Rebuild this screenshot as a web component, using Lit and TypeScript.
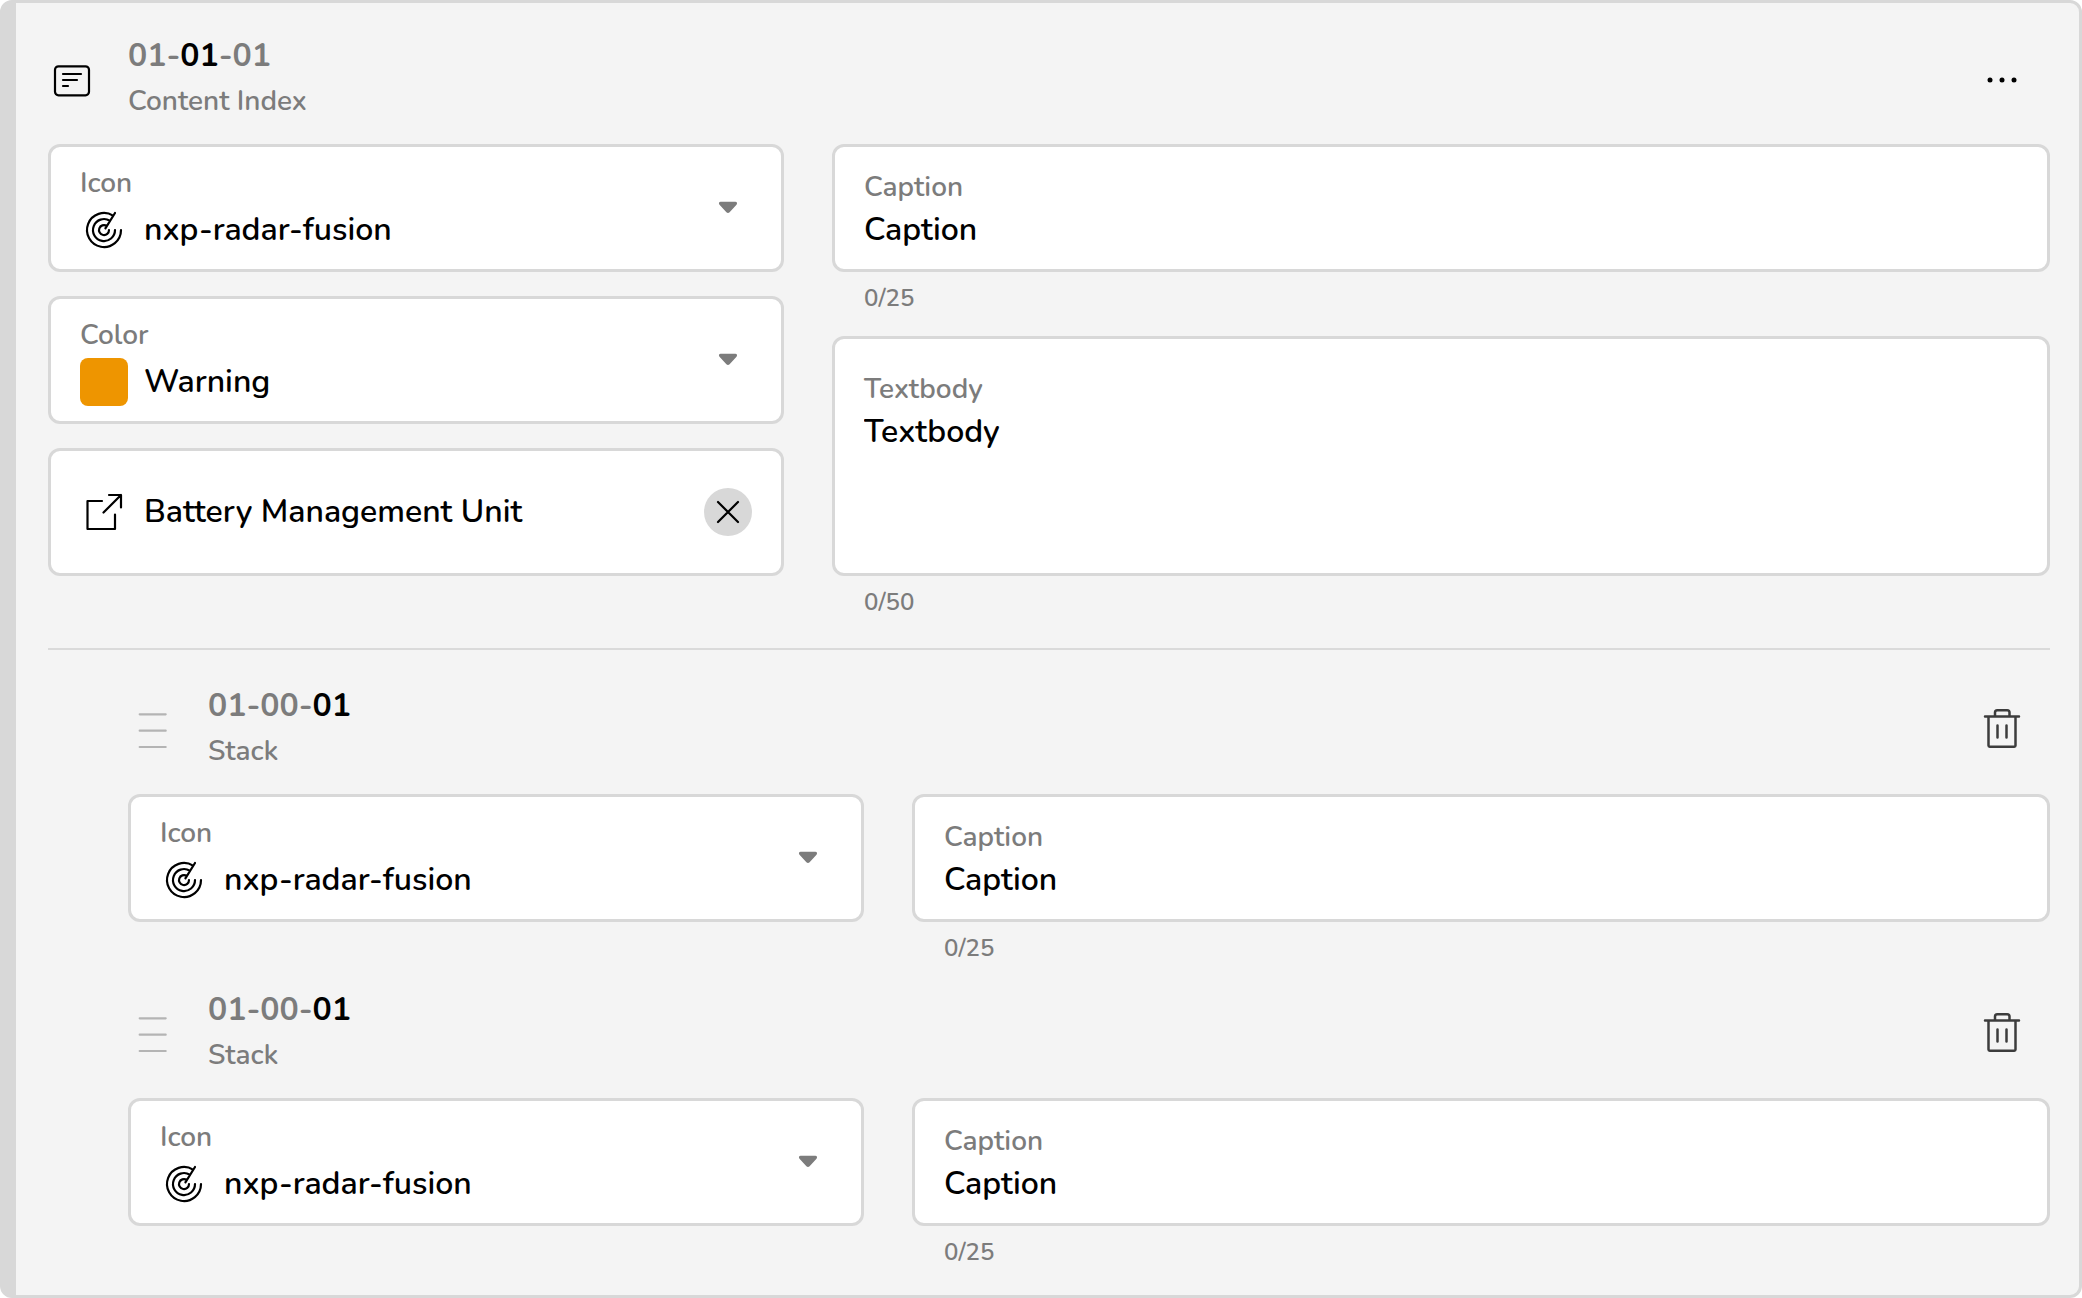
import { LitElement, html, css, svg } from "lit";
import { customElement, property } from "lit/decorators.js";

const icons = {
  content: svg`<rect x="7" y="10.3" width="34" height="29" rx="3.5"/><path d="M15 18H33M15 24H29M15 30H20"/>`,
  radar: svg`<path d="M33 9.6A17 17 0 1 0 41 24M29.8 14.7A11 11 0 1 0 35 24M26.6 19.8A5 5 0 1 0 29 24M25.4 22.4L35 7"/>`,
  external: svg`<path d="M22 13H7.5V41H35V26.5M23.5 24.5L41 7M29 7H41V19.5"/>`,
  trash: svg`<path d="M7 10.5H41M10.5 10.5V39.5Q10.5 40.7 11.7 40.7H36.3Q37.5 40.7 37.5 39.5V10.5M17 10V6.5Q17 4.2 19.3 4.2H29.2Q31.5 4.2 31.5 6.5V10M19.5 19.5V31.5M28.5 19.5V31.5"/>`,
  grip: svg`<path d="M11.7 8.3H37.7M11.7 24.7H37.7M11.7 41H37.7"/>`,
  close: svg`<path d="M14 14L34 34M34 14L14 34"/>`,
  more: svg`<g fill="currentColor" stroke="none"><circle cx="12" cy="24" r="2.5"/><circle cx="24" cy="24" r="2.5"/><circle cx="36" cy="24" r="2.5"/></g>`,
  caret: svg`<path fill="currentColor" stroke="none" d="M16.6 17.7H31.4C33 17.7 33.6 19.6 32.5 20.7L25.6 28.2Q24 29.8 22.4 28.2L15.5 20.7C14.4 19.6 15 17.7 16.6 17.7Z"/>`,
};

const icon = (name: keyof typeof icons) => html`
  <svg class="icon ${name}" viewBox="0 0 48 48" aria-hidden="true">${icons[name]}</svg>
`;

const shared = css`
  * {
    box-sizing: border-box;
  }
  .icon {
    display: block;
    flex: none;
    width: 48px;
    height: 48px;
    fill: none;
    stroke: currentColor;
    stroke-width: 2.2;
    stroke-linecap: round;
    stroke-linejoin: round;
  }
  .icon.trash {
    stroke-width: 2.5;
  }
  button {
    display: block;
    flex: none;
    width: 48px;
    height: 48px;
    padding: 0;
    border: 0;
    background: none;
    color: inherit;
    cursor: pointer;
  }
  .box {
    border: 3px solid #d8d8d8;
    border-radius: 12px;
    background: #fff;
  }
  .label {
    display: block;
    color: #7c7c7c;
    font-size: 28px;
    line-height: 40px;
  }
`;

@customElement("select-field")
export class SelectField extends LitElement {
  @property() label = "";
  @property() value = "";
  @property() kind: "icon" | "color" = "icon";

  static styles = [
    shared,
    css`
      :host {
        display: block;
      }
      .box {
        display: flex;
        align-items: center;
        height: 128px;
        padding: 0 29px;
      }
      .main {
        flex: 1;
        min-width: 0;
        align-self: stretch;
        padding-top: 16px;
      }
      .row {
        display: flex;
        gap: 16px;
        margin-top: 3px;
      }
      .swatch {
        flex: none;
        width: 48px;
        height: 48px;
        border-radius: 8px;
        background: #ee9500;
      }
      select {
        appearance: none;
        flex: 1;
        min-width: 0;
        height: 48px;
        padding: 0 0 2px;
        border: 0;
        background: none;
        color: #000;
        font: inherit;
      }
      .caret {
        color: #7c7c7c;
      }
    `,
  ];

  render() {
    return html`
      <div class="box">
        <div class="main">
          <label class="label" for="choice">${this.label}</label>
          <div class="row">
            ${this.kind === "color" ? html`<span class="swatch"></span>` : icon("radar")}
            <select id="choice">
              <option>${this.value}</option>
            </select>
          </div>
        </div>
        ${icon("caret")}
      </div>
    `;
  }
}

@customElement("text-field")
export class TextField extends LitElement {
  @property() label = "";
  @property() value = "";
  @property() count = "";
  @property({ type: Boolean }) multiline = false;

  static styles = [
    shared,
    css`
      :host {
        display: block;
      }
      .box {
        display: flex;
        flex-direction: column;
        height: 128px;
        padding: 20px 29px 14px;
      }
      .tall {
        height: 240px;
        padding-top: 30px;
      }
      input,
      textarea {
        display: block;
        width: 100%;
        height: 46px;
        padding: 0;
        border: 0;
        background: none;
        color: #000;
        font: inherit;
        line-height: 46px;
        resize: none;
      }
      textarea {
        flex: 1;
      }
      .count {
        padding: 4px 0 0 32px;
        color: #7c7c7c;
        font-size: 24px;
        line-height: 44px;
      }
    `,
  ];

  render() {
    return html`
      <div class="box ${this.multiline ? "tall" : ""}">
        <label class="label" for="text">${this.label}</label>
        ${this.multiline
          ? html`<textarea id="text" .value=${this.value}></textarea>`
          : html`<input id="text" type="text" .value=${this.value} />`}
      </div>
      <div class="count">${this.count}</div>
    `;
  }
}

@customElement("entry-header")
export class EntryHeader extends LitElement {
  @property({ type: Array }) parts: string[] = [];
  @property({ type: Number }) current = 0;
  @property() caption = "";
  @property({ type: Boolean }) stacked = false;

  static styles = [
    shared,
    css`
      :host {
        display: block;
      }
      header {
        display: flex;
        align-items: center;
        gap: 32px;
        height: 128px;
        padding-right: 24px;
      }
      .text {
        flex: 1;
        padding-bottom: 6px;
      }
      h2 {
        margin: 0;
        color: #7c7c7c;
        font-size: 32px;
        font-weight: 700;
        line-height: 48px;
      }
      b {
        color: #000;
        font-weight: 700;
      }
      p {
        margin: 0;
        color: #7c7c7c;
        font-size: 28px;
        line-height: 42px;
      }
      .grip {
        color: #b4b4b4;
      }
      .trash {
        color: #3c3c3c;
      }
    `,
  ];

  render() {
    return html`
      <header>
        ${this.stacked
          ? html`<button aria-label="Reorder">${icon("grip")}</button>`
          : icon("content")}
        <div class="text">
          <h2>${this.parts.map(
            (part, i) => html`${i ? "-" : ""}${i === this.current ? html`<b>${part}</b>` : part}`
          )}</h2>
          <p>${this.caption}</p>
        </div>
        <button aria-label=${this.stacked ? "Delete" : "More"}>
          ${icon(this.stacked ? "trash" : "more")}
        </button>
      </header>
    `;
  }
}

@customElement("app-root")
export class AppRoot extends LitElement {
  static styles = [
    shared,
    css`
      :host {
        display: block;
        background: #fff;
        color: #000;
        font-family: Nunito, Lato, "Open Sans", sans-serif;
        font-size: 32px;
        font-weight: 600;
      }
      .panel {
        padding: 13px 29px 21px 32px;
        border: 3px solid #d8d8d8;
        border-left-width: 16px;
        border-radius: 12px;
        background: #f4f4f4;
      }
      .fields {
        display: flex;
        align-items: flex-start;
        gap: 48px;
      }
      .side {
        display: grid;
        flex: 0 1 736px;
        gap: 24px;
      }
      .wide {
        display: grid;
        flex: 1;
        gap: 16px;
      }
      .link {
        display: flex;
        align-items: center;
        gap: 16px;
        height: 128px;
        padding: 0 29px;
      }
      .link a {
        display: flex;
        align-items: center;
        flex: 1;
        gap: 16px;
        color: inherit;
        text-decoration: none;
      }
      .link span {
        padding-bottom: 2px;
      }
      .clear {
        border-radius: 50%;
        background: #d8d8d8;
      }
      hr {
        height: 2px;
        margin: 24px 0 16px;
        border: 0;
        background: #dadada;
      }
      .stack {
        padding-left: 80px;
      }
    `,
  ];

  render() {
    return html`
      <main class="panel">
        <entry-header
          .parts=${["01", "01", "01"]}
          .current=${1}
          caption="Content Index"
        ></entry-header>
        <div class="fields">
          <div class="side">
            <select-field label="Icon" value="nxp-radar-fusion"></select-field>
            <select-field label="Color" value="Warning" kind="color"></select-field>
            <div class="box link">
              <a href="#">${icon("external")}<span>Battery Management Unit</span></a>
              <button class="clear" aria-label="Remove link">${icon("close")}</button>
            </div>
          </div>
          <div class="wide">
            <text-field label="Caption" value="Caption" count="0/25"></text-field>
            <text-field label="Textbody" value="Textbody" count="0/50" multiline></text-field>
          </div>
        </div>
        <hr />
        ${[0, 1].map(
          () => html`
            <section class="stack">
              <entry-header
                .parts=${["01", "00", "01"]}
                .current=${2}
                caption="Stack"
                stacked
              ></entry-header>
              <div class="fields">
                <div class="side">
                  <select-field label="Icon" value="nxp-radar-fusion"></select-field>
                </div>
                <div class="wide">
                  <text-field label="Caption" value="Caption" count="0/25"></text-field>
                </div>
              </div>
            </section>
          `
        )}
      </main>
    `;
  }
}
